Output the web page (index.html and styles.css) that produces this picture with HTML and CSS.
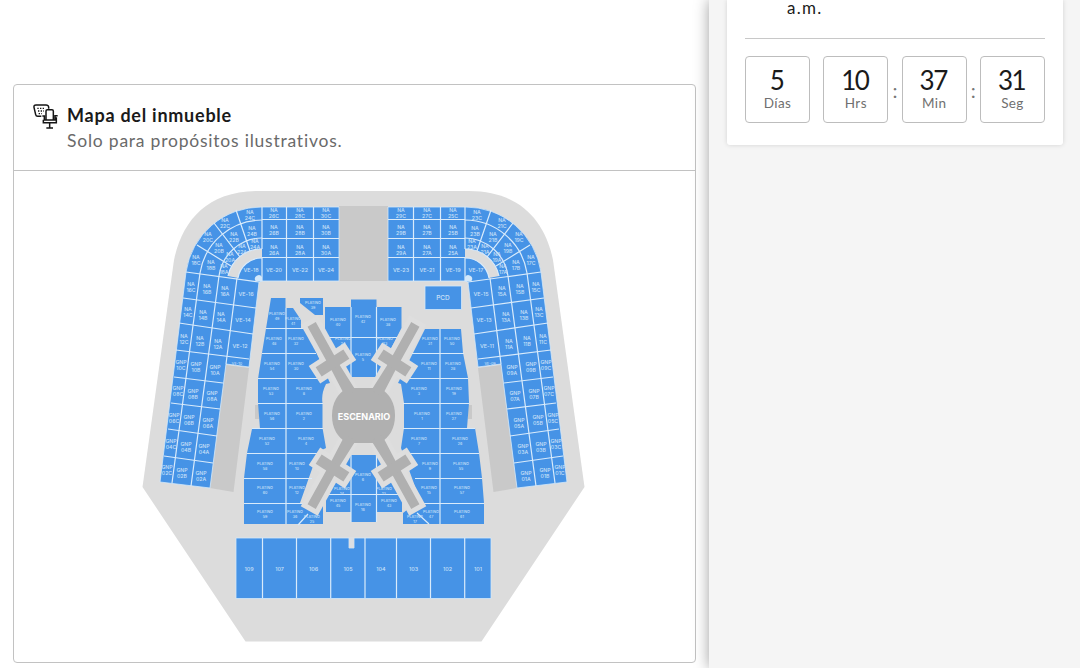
FILE: index.html
```
<!DOCTYPE html>
<html lang="es">
<head>
  <meta charset="UTF-8">
  <meta name="viewport" content="width=device-width, initial-scale=1.0">
  <title>Mapa del inmueble</title>
  <link rel="stylesheet" href="styles.css">
</head>
<body>
  <div class="page">

    <main class="contenido">
      <section class="mapa-card">
        <header class="mapa-header">
          <svg class="icono" viewBox="98 70 75 75" aria-hidden="true">
            <path d="M123 107H112Q107 107 106 102L101 80Q100 73 107 73H137Q144 73 145 79V84"/>
            <path d="M137 119V91Q137 87 141 87H155Q159 87 159 91V119M126 106H132V118H164V105H172M129 117V126H168V110M148 126V142M138 142H158"/>
            <path class="puntos" d="M111 83H135M113 91H131M115 99H125"/>
          </svg>
          <div>
            <h2>Mapa del inmueble</h2>
            <p>Solo para propósitos ilustrativos.</p>
          </div>
        </header>

        <svg class="mapa" viewBox="14 171 681 490">
          <path class="piso" d="M258 191H469C520 191 545 221 553 260L584.500 487L481.500 641.500H245.500L142.500 487L174 260C182 221 207 191 258 191Z"/>
          <path class="oscuro" d="M339 206H388V281H339ZM255 405h4v14h-4zM468 405h4v14h-4z"/>

          <!-- Lateral: el lado derecho es el espejo del izquierdo -->
          <g id="lateral">
            <path class="oscuro" d="M226 365L249 368L233.500 492L210 488Z"/>
            <path class="zona borde" d="M186 272A76 76 0 0 1 262 207H339V281H262L259 282L249 367L226 364L210 488L160 482Z"/>
            <path class="piso" d="M228 276A34 34 0 0 1 262 249V258A24 24 0 0 0 238 278Z"/>
            <path class="linea" d="M262 220A63 63 0 0 0 200 273L172 483M262 238A44 44 0 0 0 219 276L191 486M237 278L226 364"/>
            <path class="linea" d="M262 207V249M262 258V281M286.500 207V281M313.500 207V281M262 219.500H339M262 238.500H339M262 257.500H339"/>
            <path class="linea" d="M228 276A34 34 0 0 1 262 249M238 278A24 24 0 0 1 262 258"/>
            <path class="linea" d="M197 245L231 266M214 223L240 257M236 210L250 251"/>
            <path class="linea" d="M186 272L259 282M183 298L256 308M179 323L253 334M176 350L249 359M174 377L223 383M171 403L220 409M168 429L217 436M164 456L213 463"/>
            <path class="claro" d="M255.500 281A3.500 3.500 0 0 1 262 277V281.500Z"/>
          </g>
          <use href="#lateral" transform="translate(727 0) scale(-1 1)"/>

          <!-- Platino izquierda -->
          <path class="zona" d="M271 298H285.500V308L293 308L301 320V328L306 329L330 383L326 384Q321 394 322.500 403V428L326 448L318 452L300 503H323V524H244V478L247 453L252 429H260L258 403V379L262 353Z"/>
          <path class="linea" d="M286 308V524M266 328.500H305M262 353.500H316M258 378.500H326M258 403.500H323M252 428.500H323M247 453.500H318M244 478.500H312M244 503.500H310"/>
          <path class="zona" d="M300 298H323V315H315L300 303Z"/>

          <!-- Platino derecha -->
          <path class="zona" d="M425 329H461L463 353L468 378L469 403L467 428H475L479 453L482 478L484 503V524H403V513L420 500L401 448L404 428V403L401 384L398 383Z"/>
          <path class="linea" d="M440 329V524M412 353.500H464M403 378.500H468M403 403.500H469M403 428.500H475M401 453.500H479M415 478.500H482M417 503.500H484"/>

          <!-- Platino centro -->
          <path class="zona" d="M325 307H351V299.500H376.500V307H401.500V328L376.500 377H351L325 338Z"/>
          <path class="zona" d="M351 455H376.500L402 495V512H376.500V522H351V512H326V495Z"/>
          <path class="linea" d="M351 307V377M376.500 307V377M325 337.500H401M351 455V522M376.500 455V522M326 494.500H402"/>

          <rect class="zona borde" x="425" y="286" width="36.500" height="23.500"/>

          <!-- Escenario y pasarelas -->
          <circle class="piso" cx="363.500" cy="415.500" r="38"/>
          <g id="halo" class="halo">
            <path transform="translate(332.500 362) rotate(-29)" d="M-4.700 -43H4.700V36H-4.700Z"/>
            <path transform="translate(332.500 363) rotate(-33)" d="M-16.500 -5.500H16.500V5.500H-16.500Z"/>
          </g>
          <use href="#halo" transform="translate(727 0) scale(-1 1)"/>
          <use href="#halo" transform="translate(0 831) scale(1 -1)"/>
          <use href="#halo" transform="translate(727 831) scale(-1 -1)"/>
          <path class="escenario" d="M347 388H380Q395 397 395 415.500T380 443H347Q332 434 332 415.500T347 388Z"/>
          <g id="pasarela" class="escenario">
            <path transform="translate(332.500 362) rotate(-29)" d="M-4.700 -43H4.700V5L6.500 36H-5.500L-4.700 5Z"/>
            <path transform="translate(332.500 363) rotate(-33)" d="M-16.500 -5.500H16.500V5.500H-16.500Z"/>
          </g>
          <use href="#pasarela" transform="translate(727 0) scale(-1 1)"/>
          <use href="#pasarela" transform="translate(0 831) scale(1 -1)"/>
          <use href="#pasarela" transform="translate(727 831) scale(-1 -1)"/>
          <path class="linea" d="M308 514L298 525M417 513L429 524"/>
          <text class="titulo" x="364" y="416">ESCENARIO</text>

          <!-- Zona 100 -->
          <path class="zona borde" d="M236 538H349V548H354V538H491V598.500H236Z"/>
          <path class="linea" d="M262.500 538V598M296.500 538V598M330.700 538V598M365 538V598M396.500 538V598M430.500 538V598M464.700 538V598"/>
          <rect class="hueco" x="349" y="537" width="5" height="11"/>

          <g id="etiquetas"></g>
        </svg>
      </section>
    </main>

    <aside class="lateral">
      <div class="evento-card">
        <p class="hora">a.m.</p>
        <div class="contador">
          <div class="caja"><strong>5</strong><span>Días</span></div>
          <i></i>
          <div class="caja"><strong>10</strong><span>Hrs</span></div>
          <i>:</i>
          <div class="caja"><strong>37</strong><span>Min</span></div>
          <i>:</i>
          <div class="caja"><strong>31</strong><span>Seg</span></div>
        </div>
      </div>
    </aside>

  </div>
  <script src="mapa.js"></script>
</body>
</html>
```
FILE: styles.css
```
/* Reset y base */
* { box-sizing: border-box; margin: 0; padding: 0; }
body {
  font-family: Lato, "Open Sans", sans-serif;
  background: #fff;
  color: #1a1a1a;
  overflow: hidden;
}
.page {
  display: flex;
  height: 668px;
}

/* Columna del mapa */
.contenido {
  width: 709px;
  padding: 84px 13px 0;
}
.mapa-card {
  height: 579px;
  border: 1px solid #c2c2c2;
  border-radius: 4px;
  overflow: hidden;
}
.mapa-header {
  display: flex;
  gap: 9px;
  height: 86px;
  padding: 18px 19px 0;
  border-bottom: 1px solid #c2c2c2;
}
.mapa-header h2 {
  font-size: 18px;
  line-height: 24px;
  letter-spacing: 0.75px;
}
.mapa-header p {
  font-size: 17.5px;
  line-height: 27px;
  letter-spacing: 0.78px;
  color: #6a6a6a;
}
.icono {
  width: 25px;
  height: 25px;
  margin-top: 1px;
  fill: none;
  stroke: #151515;
  stroke-width: 4.5;
}
.icono .puntos {
  stroke-width: 4;
  stroke-dasharray: 4 4;
}

/* Mapa */
.mapa {
  display: block;
  width: 681px;
  height: 490px;
}
.piso { fill: #dcdcdc; }
.oscuro { fill: #c9c9c9; }
.zona { fill: #4693e6; }
.borde { stroke: #d3e8fa; stroke-width: 0.8; }
.claro { fill: #d3e8fa; }
.hueco { fill: #dcdfe3; }
.linea {
  fill: none;
  stroke: #d9ebfb;
  stroke-width: 1.2;
}
.halo {
  fill: #dedede;
  stroke: #dedede;
  stroke-width: 10;
}
.escenario { fill: #b0b0b0; }
.mapa text {
  fill: #c9e0f8;
  font-family: Inter, sans-serif;
  font-weight: 500;
  text-anchor: middle;
  dominant-baseline: central;
}
.mapa .titulo {
  fill: #fff;
  font-size: 9px;
  font-weight: 700;
}
.mapa .na { font-size: 5.2px; }
.mapa .ve { font-size: 5.4px; }
.mapa .platino { font-size: 3.7px; }
.mapa .pcd { font-size: 6.5px; }

/* Columna derecha */
.lateral {
  flex: 1;
  padding: 0 17px 0 18px;
  background: #f5f5f5;
  box-shadow: 0 0 14px rgba(0, 0, 0, 0.38);
}
.evento-card {
  height: 145px;
  padding: 0 18px;
  background: #fff;
  border-radius: 0 0 3px 3px;
  box-shadow: 0 0 5px rgba(0, 0, 0, 0.14);
}
.hora {
  height: 39px;
  padding-left: 42px;
  border-bottom: 1px solid #c8c8c8;
  font-size: 17px;
  line-height: 16px;
  letter-spacing: 1.3px;
}
.contador {
  display: flex;
  padding-top: 17px;
}
.caja {
  display: flex;
  flex-direction: column;
  align-items: center;
  width: 65px;
  height: 67px;
  padding-top: 8px;
  border: 1px solid #bdbdbd;
  border-radius: 4px;
}
.caja strong {
  margin-right: 2px;
  font-size: 26px;
  font-weight: 400;
  line-height: 31px;
  letter-spacing: -1.5px;
}
.caja span {
  font-size: 13.5px;
  line-height: 15px;
  letter-spacing: 0.4px;
  color: #707070;
}
.contador i {
  flex: 1;
  padding-top: 22px;
  font-size: 20px;
  font-style: normal;
  line-height: 24px;
  text-align: center;
  color: #777;
}
```
FILE: mapa.js
```
const capa = document.getElementById('etiquetas');

// Escribe una o dos líneas centradas en (x, y)
function etiqueta(x, y, lineas, clase, alto) {
  lineas.forEach((linea, i) => {
    const t = document.createElementNS('http://www.w3.org/2000/svg', 'text');
    t.setAttribute('class', clase);
    t.setAttribute('x', x);
    t.setAttribute('y', y + (i - (lineas.length - 1) / 2) * alto);
    t.textContent = linea;
    capa.appendChild(t);
  });
}

const espejo = x => 727 - x;
const dos = n => String(n).padStart(2, '0');

// Filas C, B y A: [prefijo, número izquierdo, número derecho, C, B, A]
const secciones = [
  ['NA', 30, 29, [326, 213], [326, 230], [326, 249.5]],
  ['NA', 28, 27, [300, 213], [300, 230], [300, 249.5]],
  ['NA', 26, 25, [274, 213], [274, 230], [274, 249.5]],
  ['NA', 24, 23, [250, 215], [252, 231], [255, 244]],
  ['NA', 22, 21, [225, 223], [234, 237], [242, 249]],
  ['NA', 20, 19, [208, 237], [219, 248], [230, 257]],
  ['NA', 18, 17, [196, 260], [211, 265], [224, 269]],
  ['NA', 16, 15, [191, 287], [207, 289], [225, 291]],
  ['NA', 14, 13, [188, 312], [203, 315], [221, 317]],
  ['NA', 12, 11, [184, 339], [200, 341], [218, 344]],
  ['GNP', 10, 9, [181, 365], [196, 367], [215, 370]],
  ['GNP', 8, 7, [178, 391], [193, 394], [212, 396]],
  ['GNP', 6, 5, [174, 418], [189, 420], [208, 423]],
  ['GNP', 4, 3, [171, 444], [186, 447], [204, 449]],
  ['GNP', 2, 1, [167, 470], [182, 473], [201, 476]]
];
secciones.forEach(([prefijo, izq, der, ...puntos]) => {
  puntos.forEach(([x, y], i) => {
    etiqueta(x, y, [prefijo, dos(izq) + 'CBA'[i]], 'na', 6);
    etiqueta(espejo(x), y, [prefijo, dos(der) + 'CBA'[i]], 'na', 6);
  });
});

// Zona VE
[
  [326, 270, 24, 23], [300, 270, 22, 21], [274, 270, 20, 19], [251, 270, 18, 17],
  [246, 294, 16, 15], [243, 320, 14, 13], [240, 346, 12, 11], [237, 363, 10, '09']
].forEach(([x, y, izq, der]) => {
  etiqueta(x, y, ['VE-' + izq], y === 363 ? 'platino' : 've', 0);
  etiqueta(espejo(x), y, ['VE-' + der], y === 363 ? 'platino' : 've', 0);
});

// Platino
[
  [277, 316, 49], [293, 321, 41], [313, 305, 39], [338, 322, 40], [363, 319, 42], [388, 322, 38],
  [274, 341, 48], [296, 341, 32], [343, 341, 24], [385, 341, 23], [430, 341, 31], [452, 341, 50],
  [272, 366, 54], [296, 366, 30], [363, 357, 5], [429, 366, 11], [453, 366, 28],
  [271, 391, 53], [304, 391, 8], [419, 391, 3], [454, 391, 19],
  [272, 416, 56], [304, 416, 2], [422, 416, 1], [454, 416, 27],
  [267, 441, 52], [306, 441, 4], [419, 441, 7], [460, 441, 26],
  [265, 466, 58], [297, 466, 10], [430, 466, 9], [461, 466, 55],
  [265, 490, 60], [297, 490, 12], [363, 477, 6], [342, 491, 14], [384, 491, 13], [429, 490, 15], [462, 490, 57],
  [265, 514, 59], [295, 514, 36], [312, 519, 25], [338, 503, 45], [363, 507, 16], [389, 503, 43], [415, 519, 17], [431, 514, 47], [462, 514, 61]
].forEach(([x, y, n]) => etiqueta(x, y, ['PLATINO', n], 'platino', 4.8));

etiqueta(443, 298, ['PCD'], 'pcd', 0);

// Zona 100: 109, 107, 106 ... 101
[249, 279.5, 313.5, 348, 381, 413.5, 447.5, 478].forEach((x, i) => {
  etiqueta(x, 569, [i === 0 ? 109 : 108 - i], 've', 0);
});
```
